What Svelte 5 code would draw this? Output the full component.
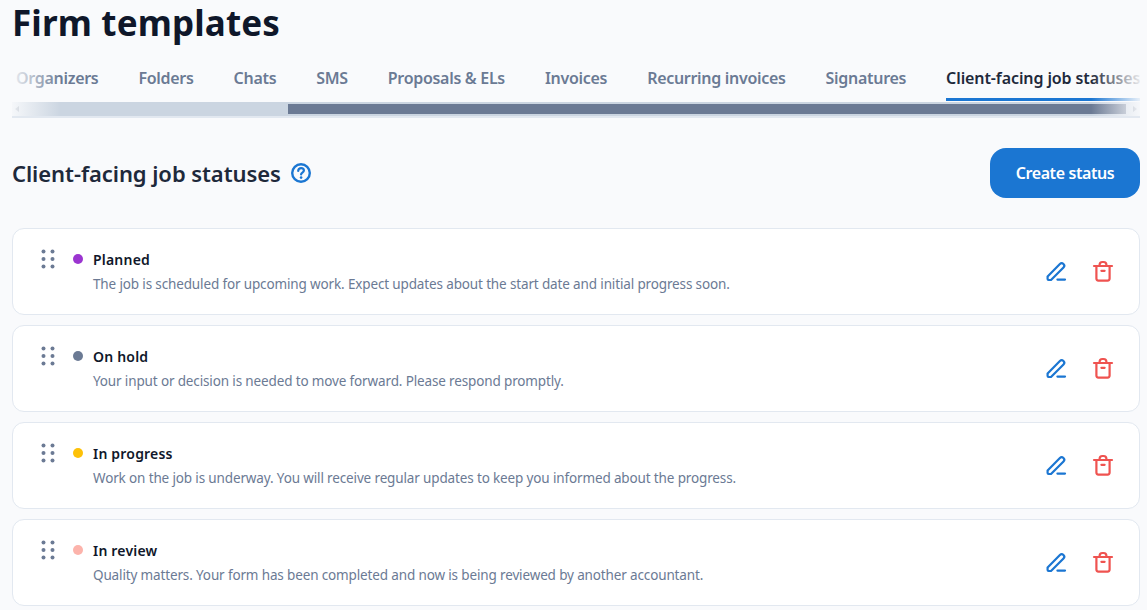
<script lang="ts">
  const tabs = ['Organizers', 'Folders', 'Chats', 'SMS', 'Proposals & ELs', 'Invoices', 'Recurring invoices', 'Signatures', 'Client-facing job statuses'];
  const statuses = [
    { name: 'Planned', color: '#9b35d0', text: 'The job is scheduled for upcoming work. Expect updates about the start date and initial progress soon.' },
    { name: 'On hold', color: '#6b7a94', text: 'Your input or decision is needed to move forward. Please respond promptly.' },
    { name: 'In progress', color: '#fdc108', text: 'Work on the job is underway. You will receive regular updates to keep you informed about the progress.' },
    { name: 'In review', color: '#fcb3ab', text: 'Quality matters. Your form has been completed and now is being reviewed by another accountant.' },
  ];
</script>

<div class="page">
  <h1>Firm templates</h1>

  <div class="tabs-wrap">
    <div class="tabs">
      {#each tabs as tab, i}
        <span class="tab" class:active={i === tabs.length - 1}>{tab}</span>
      {/each}
    </div>
    <div class="scrollbar">
      <span class="arrow left"></span>
      <div class="track"><div class="thumb"></div></div>
      <span class="arrow right"></span>
    </div>
    <div class="fade fade-left"></div>
    <div class="fade fade-right"></div>
  </div>

  <div class="head">
    <div class="head-title">
      <h2>Client-facing job statuses</h2>
      <svg width="22" height="22" viewBox="0 0 22 22" fill="none" stroke="#1b76d2">
        <circle cx="11" cy="11" r="8.8" stroke-width="2.4" />
        <path d="M8.2 8.9c0-1.7 1.2-2.7 2.9-2.7 1.6 0 2.8 1 2.8 2.4 0 2-2.8 2-2.8 3.8" stroke-width="2.2" stroke-linecap="round" />
        <circle cx="11.1" cy="15.6" r="1.3" fill="#1b76d2" stroke="none" />
      </svg>
    </div>
    <button class="create">Create status</button>
  </div>

  <div class="list">
    {#each statuses as s}
      <div class="card">
        <svg class="grip" width="14" height="20" viewBox="0 0 14 20" fill="#6b7a94">
          <circle cx="2.5" cy="2.5" r="2" /><circle cx="11.5" cy="2.5" r="2" />
          <circle cx="2.5" cy="10" r="2" /><circle cx="11.5" cy="10" r="2" />
          <circle cx="2.5" cy="17.5" r="2" /><circle cx="11.5" cy="17.5" r="2" />
        </svg>
        <span class="dot" style="background: {s.color}"></span>
        <div class="body">
          <div class="name">{s.name}</div>
          <div class="desc">{s.text}</div>
        </div>
        <div class="actions">
          <svg width="22" height="22" viewBox="0 0 22 22" fill="none" stroke="#1b76d2" stroke-width="2.2" stroke-linecap="round" stroke-linejoin="round">
            <path d="M2.6 16.4 14.9 4a2.5 2.5 0 0 1 3.6 3.5L6 20H3.6a1 1 0 0 1-1-1z" />
            <path d="M12.4 19.6h7.6" />
          </svg>
          <svg width="22" height="22" viewBox="0 0 22 22" fill="none" stroke="#ef5350" stroke-width="2.2" stroke-linecap="round" stroke-linejoin="round">
            <path d="M2 6h18" />
            <path d="M4.4 6v12.6a2 2 0 0 0 2 2h9.2a2 2 0 0 0 2-2V6" />
            <path d="M7.6 6V4.8a2.8 2.8 0 0 1 2.8-2.8h1.2a2.8 2.8 0 0 1 2.8 2.8V6" />
            <path d="M9.4 10.8h3.2" />
          </svg>
        </div>
      </div>
    {/each}
  </div>
</div>

<style>
  :global(body) {
    margin: 0;
    background: #f9fafc;
    overflow: hidden;
  }
  .page {
    height: 610px;
    overflow: hidden;
    box-sizing: border-box;
    padding: 0 7px 0 12px;
    font-family: "Noto Sans", sans-serif;
  }
  h1 {
    margin: 0;
    height: 46px;
    font-size: 35px;
    line-height: 46px;
    font-weight: 700;
    color: #0f172a;
    letter-spacing: 0.15px;
  }
  .tabs-wrap {
    position: relative;
    margin-top: 9px;
    border-bottom: 2px solid #e2e8f0;
    overflow: hidden;
  }
  .tabs {
    display: flex;
    gap: 40px;
    height: 46px;
    margin-left: 4px;
    white-space: nowrap;
    box-sizing: border-box;
  }
  .tab {
    height: 46px;
    box-sizing: border-box;
    line-height: 46px;
    font-size: 16px;
    font-weight: 600;
    color: #6b7a94;
    flex-shrink: 0;
    letter-spacing: -0.3px;
  }
  .tab.active {
    color: #1e293b;
    border-bottom: 3px solid #1b76d2;
    letter-spacing: -0.1px;
  }
  .scrollbar {
    display: flex;
    height: 14px;
    margin-top: 1px;
    background: #cbd5e1;
  }
  .arrow {
    width: 14px;
    flex-shrink: 0;
    position: relative;
  }
  .arrow::after {
    content: '';
    position: absolute;
    top: 4px;
    border: 3px solid transparent;
  }
  .arrow.left::after {
    left: 0;
    border-right: 4px solid #64748b;
  }
  .arrow.right::after {
    right: 0;
    border-left: 4px solid #64748b;
  }
  .track {
    flex: 1;
    padding: 2px 0;
    display: flex;
    justify-content: flex-end;
    box-sizing: border-box;
  }
  .thumb {
    width: 838px;
    background: #6b7a94;
  }
  .fade {
    position: absolute;
    top: 0;
    bottom: 0;
    width: 49px;
  }
  .fade-left {
    left: 0;
    background: linear-gradient(to right, rgba(249, 250, 252, 0.92), rgba(249, 250, 252, 0));
  }
  .fade-right {
    right: 0;
    background: linear-gradient(to left, rgba(249, 250, 252, 0.92), rgba(249, 250, 252, 0));
  }
  .head {
    display: flex;
    align-items: center;
    justify-content: space-between;
    margin-top: 30px;
  }
  .head-title {
    display: flex;
    align-items: center;
    gap: 9px;
  }
  h2 {
    margin: 0;
    font-size: 22px;
    font-weight: 600;
    color: #1e293b;
    letter-spacing: -0.07px;
  }
  .create {
    width: 150px;
    height: 50px;
    border: 0;
    border-radius: 16px;
    background: #1b76d2;
    color: #fff;
    font-family: inherit;
    font-size: 16px;
    font-weight: 600;
    letter-spacing: -0.4px;
  }
  .list {
    display: flex;
    flex-direction: column;
    gap: 10px;
    margin-top: 30px;
  }
  .card {
    display: flex;
    align-items: flex-start;
    height: 87px;
    box-sizing: border-box;
    padding: 20px 0 0 28px;
    background: #fff;
    border: 1px solid #e2e8f0;
    border-radius: 12px;
  }
  .grip {
    flex-shrink: 0;
  }
  .dot {
    width: 10px;
    height: 10px;
    border-radius: 50%;
    margin: 5px 0 0 18px;
    flex-shrink: 0;
  }
  .body {
    flex: 1;
    margin-left: 10px;
    padding-top: 1px;
  }
  .name {
    font-size: 14px;
    font-weight: 600;
    line-height: 20px;
    color: #0f172a;
    letter-spacing: 0.2px;
  }
  .desc {
    font-size: 13.5px;
    line-height: 20px;
    margin-top: 4px;
    color: #6b7a94;
    letter-spacing: -0.14px;
  }
  .actions {
    display: flex;
    gap: 25px;
    margin: 11px 25px 0 0;
  }
</style>
